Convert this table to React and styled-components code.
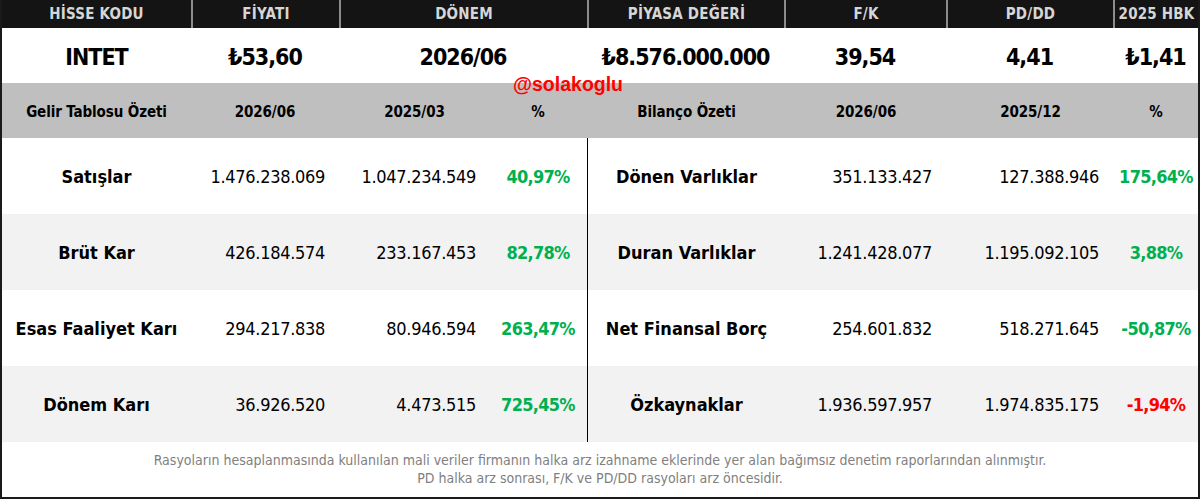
import React from 'react'
import styled, { createGlobalStyle } from 'styled-components'

const GlobalStyle = createGlobalStyle`
  html, body {
    margin: 0;
    padding: 0;
    background: #ffffff;
  }
  * {
    box-sizing: border-box;
  }
`;

const FONT = `"Liberation Sans Narrow", "DejaVu Sans Condensed", "Liberation Sans", sans-serif`;

const TOP_COLS = '189px 148px 248px 197px 162px 167px 1fr';
const LEFT_COLS = '189px 148px 151px 96px';
const RIGHT_COLS = '197px 162px 167px 1fr';

const Frame = styled.div`
    position: relative;
    width: 1200px;
    height: 499px;
    border-left: 2px solid #1a1a1a;
    border-right: 2px solid #1a1a1a;
    border-bottom: 2px solid #1a1a1a;
    font-family: ${FONT};
    display: flex;
    flex-direction: column;
    overflow: hidden;
`;

const HeadRow = styled.div`
    display: grid;
    grid-template-columns: ${TOP_COLS};
    height: 28px;
    background: #141414;
`;

const HeadCell = styled.div`
    display: flex;
    align-items: center;
    justify-content: center;
    color: #d6d6d6;
    font-weight: 700;
    font-size: 15px;
    letter-spacing: 0.2px;
    border-left: ${p => p.$first ? 'none' : '2px solid #8c8c8c'};
`;

const ValueRow = styled.div`
    display: grid;
    grid-template-columns: ${TOP_COLS};
    height: 55px;
    background: #ffffff;
`;

const ValueCell = styled.div`
    display: flex;
    align-items: center;
    justify-content: center;
    color: #000;
    font-weight: 700;
    font-size: 23px;
    letter-spacing: -1px;
    padding-top: 3px;
`;

const Band = styled.div`
    display: grid;
    grid-template-columns: 585px 1fr;
    height: 55px;
    background: #bfbfbf;
`;

const BandGroup = styled.div`
    display: grid;
    grid-template-columns: ${p => p.$cols};
    padding-left: ${p => p.$right ? '1px' : '0'};
`;

const BandCell = styled.div`
    display: flex;
    align-items: center;
    justify-content: center;
    color: #000;
    font-weight: 700;
    font-size: 15px;
    letter-spacing: -0.1px;
    padding-top: 3px;
`;

const Body = styled.div`
    display: grid;
    grid-template-columns: 585px 1fr;
`;

const Panel = styled.div`
    border-left: ${p => p.$right ? '1px solid #000' : 'none'};
`;

const DataRow = styled.div`
    display: grid;
    grid-template-columns: ${p => p.$cols};
    height: 76px;
    background: ${p => p.$shade ? '#f2f2f2' : '#ffffff'};
`;

const Label = styled.div`
    display: flex;
    align-items: center;
    justify-content: center;
    font-weight: 700;
    font-size: 18px;
    color: #000;
`;

const Num = styled.div`
    display: flex;
    align-items: center;
    justify-content: flex-end;
    padding-right: ${p => p.$pr || 14}px;
    font-size: 18px;
    letter-spacing: -0.3px;
    color: #000;
`;

const Pct = styled.div`
    display: flex;
    align-items: center;
    justify-content: center;
    font-weight: 700;
    font-size: 18px;
    letter-spacing: -0.7px;
    color: ${p => p.$neg ? '#ff0000' : '#00b050'};
`;

const Footer = styled.div`
    flex: 1;
    display: flex;
    flex-direction: column;
    align-items: center;
    justify-content: center;
    color: #808080;
    font-size: 14px;
    line-height: 18px;
    padding-bottom: 2px;
`;

const Watermark = styled.div`
    position: absolute;
    left: 511px;
    top: 73px;
    color: #ff0000;
    font-family: "Liberation Sans", Arial, sans-serif;
    font-weight: 700;
    font-size: 19.5px;
`;

const heads = ['HİSSE KODU', 'FİYATI', 'DÖNEM', 'PİYASA DEĞERİ', 'F/K', 'PD/DD', '2025 HBK'];
const values = ['INTET', '₺53,60', '2026/06', '₺8.576.000.000', '39,54', '4,41', '₺1,41'];

const income = [
    ['Satışlar', '1.476.238.069', '1.047.234.549', '40,97%'],
    ['Brüt Kar', '426.184.574', '233.167.453', '82,78%'],
    ['Esas Faaliyet Karı', '294.217.838', '80.946.594', '263,47%'],
    ['Dönem Karı', '36.926.520', '4.473.515', '725,45%'],
];

const balance = [
    ['Dönen Varlıklar', '351.133.427', '127.388.946', '175,64%'],
    ['Duran Varlıklar', '1.241.428.077', '1.195.092.105', '3,88%'],
    ['Net Finansal Borç', '254.601.832', '518.271.645', '-50,87%'],
    ['Özkaynaklar', '1.936.597.957', '1.974.835.175', '-1,94%', true],
];

const App = () => {
  return (
    <>
        <GlobalStyle />
        <Frame>
            <HeadRow>
                {heads.map((h, i) => <HeadCell key={h} $first={i === 0}>{h}</HeadCell>)}
            </HeadRow>
            <ValueRow>
                {values.map(v => <ValueCell key={v}>{v}</ValueCell>)}
            </ValueRow>
            <Band>
                <BandGroup $cols={LEFT_COLS}>
                    <BandCell>Gelir Tablosu Özeti</BandCell>
                    <BandCell>2026/06</BandCell>
                    <BandCell>2025/03</BandCell>
                    <BandCell>%</BandCell>
                </BandGroup>
                <BandGroup $cols={RIGHT_COLS} $right>
                    <BandCell>Bilanço Özeti</BandCell>
                    <BandCell>2026/06</BandCell>
                    <BandCell>2025/12</BandCell>
                    <BandCell>%</BandCell>
                </BandGroup>
            </Band>
            <Body>
                <Panel>
                    {income.map((r, i) => (
                        <DataRow key={r[0]} $cols={LEFT_COLS} $shade={i % 2 === 1}>
                            <Label>{r[0]}</Label>
                            <Num>{r[1]}</Num>
                            <Num>{r[2]}</Num>
                            <Pct $neg={r[4]}>{r[3]}</Pct>
                        </DataRow>
                    ))}
                </Panel>
                <Panel $right>
                    {balance.map((r, i) => (
                        <DataRow key={r[0]} $cols={RIGHT_COLS} $shade={i % 2 === 1}>
                            <Label>{r[0]}</Label>
                            <Num $pr={15}>{r[1]}</Num>
                            <Num $pr={15}>{r[2]}</Num>
                            <Pct $neg={r[4]}>{r[3]}</Pct>
                        </DataRow>
                    ))}
                </Panel>
            </Body>
            <Footer>
                <div>Rasyoların hesaplanmasında kullanılan mali veriler firmanın halka arz izahname eklerinde yer alan bağımsız denetim raporlarından alınmıştır.</div>
                <div>PD halka arz sonrası, F/K ve PD/DD rasyoları arz öncesidir.</div>
            </Footer>
            <Watermark>@solakoglu</Watermark>
        </Frame>
    </>
  )
}

export default App
